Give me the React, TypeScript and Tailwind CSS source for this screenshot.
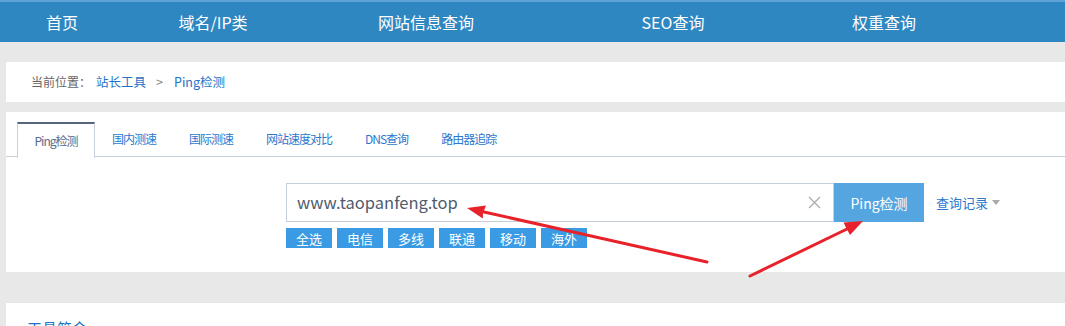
import React from "react";

const navItems = [
  { label: "首页", w: "w-[124px]" },
  { label: "域名/IP类", w: "w-[178px]" },
  { label: "网站信息查询", w: "w-[248px]" },
  { label: "SEO查询", w: "w-[246px]" },
  { label: "权重查询", w: "w-[176px]" },
];

const tabs = ["Ping检测", "国内测速", "国际测速", "网站速度对比", "DNS查询", "路由器追踪"];
const chips = ["全选", "电信", "多线", "联通", "移动", "海外"];

export default function App() {
  return (
    <div className="relative h-[326px] w-full overflow-hidden bg-[#e8e8e8] font-['Noto_Sans_CJK_SC',sans-serif]">
      {/* Top nav */}
      <div className="flex h-[42px] border-t-2 border-[#5ea2d8] bg-[#2e87c1] text-white">
        {navItems.map((n) => (
          <div key={n.label} className={`${n.w} flex items-center justify-center text-[16px] leading-none`}>
            {n.label}
          </div>
        ))}
      </div>

      {/* Breadcrumb */}
      <div className="ml-[6px] mt-[20px] flex h-[40px] items-center bg-white pl-[25px] text-[12.5px] leading-none">
        <span className="text-[12px] text-[#666]">当前位置：</span>
        <span className="ml-[5px] text-[#1f73c6]">站长工具</span>
        <span className="ml-[10px] text-[#888]">&gt;</span>
        <span className="ml-[11px] text-[#1f73c6]">Ping检测</span>
      </div>

      {/* Main card */}
      <div className="ml-[6px] mt-[10px] h-[160px] bg-white pt-[10px]">
        <div className="flex h-[35px] border-b border-[#c8d0dc] pl-[11px]">
          {tabs.map((t, i) =>
            i === 0 ? (
              <div
                key={t}
                className="-mb-px flex h-[36px] items-center border-x border-t-2 border-x-[#c8d0dc] border-t-[#56657f] bg-white px-[16.5px] text-[12px] leading-none tracking-[-1px] text-[#5a6a8c]"
              >
                {t}
              </div>
            ) : (
              <div key={t} className="flex items-center pl-[17px] pr-[16px] text-[12px] leading-none tracking-[-1px] text-[#2a78cf]">
                {t}
              </div>
            )
          )}
        </div>

        <div className="ml-[280px] mt-[26px] flex items-start">
          <div className="flex flex-col">
            <div className="flex">
              <div className="flex h-[39px] w-[548px] items-center justify-between border border-[#c6cedb] pl-[10px] pr-[12px]">
                <span className="text-[16.5px] leading-none text-[#4f5b6e]">www.taopanfeng.top</span>
                <svg width="13" height="13" viewBox="0 0 13 13" className="text-[#aaa]">
                  <path d="M1 1L12 12M12 1L1 12" stroke="currentColor" strokeWidth="1.2" />
                </svg>
              </div>
              <div className="flex h-[39px] w-[90px] items-center justify-center bg-[#55a6e0] text-[14px] leading-none text-white">
                Ping检测
              </div>
            </div>
            <div className="mt-[6px] flex gap-[5px]">
              {chips.map((c) => (
                <div
                  key={c}
                  className="flex h-[20px] w-[46px] items-center justify-center bg-[#3a9be4] text-[13px] leading-none text-white"
                >
                  {c}
                </div>
              ))}
            </div>
          </div>
          <div className="ml-[12px] flex h-[39px] items-center text-[13px] leading-none text-[#2a78cf]">
            查询记录
            <svg width="8" height="5" viewBox="0 0 8 5" className="ml-[4px]">
              <path d="M0 0H8L4 5Z" fill="#aaa" />
            </svg>
          </div>
        </div>
      </div>

      {/* Intro card */}
      <div className="ml-[6px] mt-[31px] h-[60px] bg-white pl-[21px] pt-[17px]">
        <div className="text-[15px] leading-none text-[#1f73c6]">工具简介</div>
      </div>

      {/* Annotation arrows */}
      <svg className="pointer-events-none absolute left-0 top-0" width="1065" height="326">
        <line x1="707" y1="262" x2="484" y2="212" stroke="#e8222a" strokeWidth="3" strokeLinecap="round" />
        <polygon points="467,208 486,205.5 483,213 482.8,218.5" fill="#e8222a" />
        <line x1="750" y1="276" x2="847" y2="229" stroke="#e8222a" strokeWidth="3" strokeLinecap="round" />
        <polygon points="863,221 850,235 846.5,228.5 843.5,222.5" fill="#e8222a" />
      </svg>
    </div>
  );
}
